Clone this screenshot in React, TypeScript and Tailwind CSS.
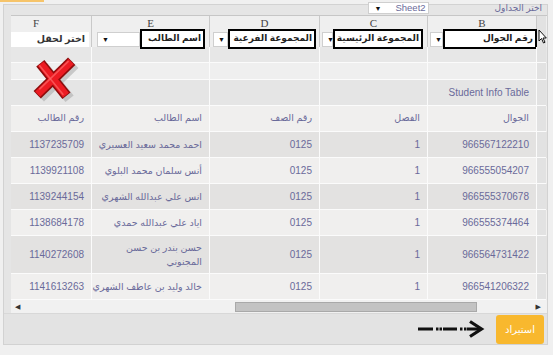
import React from "react";

type Row = {
  id: string;
  name: string[];
  cls: string;
  sec: string;
  phone: string;
  tall?: boolean;
};

const rows: Row[] = [
  { id: "1137235709", name: ["احمد محمد سعيد العسيري"], cls: "0125", sec: "1", phone: "966567122210" },
  { id: "1139921108", name: ["أنس سلمان محمد البلوي"], cls: "0125", sec: "1", phone: "966555054207" },
  { id: "1139244154", name: ["انس علي عبدالله الشهري"], cls: "0125", sec: "1", phone: "966555370678" },
  { id: "1138684178", name: ["اياد علي عبدالله حمدي"], cls: "0125", sec: "1", phone: "966555374464" },
  { id: "1140272608", name: ["حسن بندر بن حسن", "المجنوني"], cls: "0125", sec: "1", phone: "966564731422", tall: true },
  { id: "1141613263", name: ["خالد وليد بن عاطف الشهري"], cls: "0125", sec: "1", phone: "966541206322" },
];

const grid = "grid grid-cols-[81px_118px_110px_108px_109px_9px]";
const cell = "flex items-center justify-end border-r border-b border-[#fbfbfb] pr-[7px] text-right whitespace-nowrap";
const nameCell = "flex flex-col items-end justify-center border-r border-b border-[#fbfbfb] pr-[7px] text-right whitespace-nowrap text-[9.5px]";
const blank = "border-r border-b border-[#fbfbfb]";
const gutter = "border-b border-[#fbfbfb] bg-[#e2e2e2]";

const Tri = () => <span className="text-[7px] leading-none text-[#111]">▼</span>;

const Picker = ({ white, box, label, pl, pr }: { white: string; box: string; label: string; pl: string; pr: string }) => (
  <div className={`flex items-center justify-end border-r border-[#c9c9c9] ${pl} ${pr}`}>
    <div className={`flex h-[15px] items-center border border-[#cfcfcf] bg-white pl-[4px] ${white}`}>
      <Tri />
    </div>
    <div
      className={`flex h-[20px] items-center justify-end whitespace-nowrap border-2 border-black bg-white pr-[2px] text-[9px] font-bold text-[#222] ${box}`}
    >
      <span dir="rtl">{label}</span>
    </div>
  </div>
);

const RedX = () => (
  <svg width="46" height="46" viewBox="0 0 44 44" className="absolute left-[33px] top-[57px]">
    <g stroke="#9a9a9a" strokeOpacity="0.45" strokeWidth="10">
      <line x1="10" y1="9" x2="35" y2="40" />
      <line x1="40" y1="7" x2="7" y2="39" />
    </g>
    <g stroke="#8e0b0b" strokeWidth="10">
      <line x1="7" y1="6" x2="32" y2="37" />
      <line x1="37" y1="4" x2="4" y2="36" />
    </g>
    <g stroke="#ec1b22" strokeWidth="7">
      <line x1="7.5" y1="6.5" x2="31.5" y2="36.5" />
      <line x1="36.5" y1="4.5" x2="4.5" y2="35.5" />
    </g>
    <g stroke="#ff6a6a" strokeWidth="1.5" strokeOpacity="0.7">
      <line x1="6" y1="8" x2="29" y2="36" />
      <line x1="34" y1="4" x2="6" y2="31" />
    </g>
  </svg>
);

const Pointer = () => (
  <svg width="9" height="15" viewBox="0 0 9 15" className="absolute left-[538px] top-[29px]">
    <path d="M1 1 L1 12 L3.5 9.5 L5.5 14 L7 13.3 L5 9 L8.3 9 Z" fill="#fff" stroke="#111" strokeWidth="1" strokeLinejoin="round" />
  </svg>
);

const DashArrow = () => (
  <svg width="68" height="18" viewBox="0 0 68 18">
    <g fill="#111">
      <rect x="0" y="7.5" width="15" height="3" />
      <rect x="18" y="7.5" width="2.5" height="3" />
      <rect x="21.5" y="7.5" width="2.5" height="3" />
      <rect x="25" y="7.5" width="14" height="3" />
      <rect x="42" y="7.5" width="2.5" height="3" />
      <rect x="46" y="7.5" width="2.5" height="3" />
      <rect x="49" y="7.5" width="13" height="3" />
    </g>
    <path d="M52 1.5 L63.5 9 L52 16.5" fill="none" stroke="#111" strokeWidth="3.2" strokeLinejoin="miter" />
  </svg>
);

export default function App() {
  return (
    <div className="relative h-[355px] w-[553px] overflow-hidden bg-[#f0f0f0] font-['Liberation_Sans','DejaVu_Sans',sans-serif]">
      <div className="h-[2px] w-[44px] bg-[#f6c46a]" />
      <div className="ml-[3px] mt-[2px] w-[545px] border border-[#d2d2d2] bg-[#e5e5e5]">
        {/* top bar */}
        <div className="flex h-[10px] items-start justify-end pr-[5px]">
          <div className="-mt-[3px] flex h-[12px] w-[61px] items-center justify-between border border-[#cfcfcf] bg-white pl-[6px] pr-[2px]">
            <Tri />
            <span className="text-[9.5px] leading-none text-[#6a6a9a]">Sheet2</span>
          </div>
          <span dir="rtl" className="ml-[66px] -mt-[1px] text-[9px] leading-none text-[#6a6a9a]">
            اختر الجداول
          </span>
        </div>

        {/* sheet grid */}
        <div className="pl-[7px]">
          <div className={`${grid} h-[14px] border-t border-[#c6c6c6] bg-[#efefef] font-['Liberation_Serif',serif] text-[11px] leading-[14px] text-[#444]`}>
            <div className="border-r border-[#c9c9c9] pl-[22px]">F</div>
            <div className="border-r border-[#c9c9c9] text-center">E</div>
            <div className="border-r border-[#c9c9c9] text-center">D</div>
            <div className="border-r border-[#c9c9c9] text-center">C</div>
            <div className="border-r border-[#c9c9c9] text-center">B</div>
            <div className="bg-[#e2e2e2]" />
          </div>

          <div className={`${grid} h-[18px] bg-[#efefef]`}>
            <div className="flex items-center border-r border-[#c9c9c9] pr-[2px]">
              <div className="flex h-[15px] w-full items-center justify-end bg-white pr-[4px] text-[9.5px] font-bold text-[#333]">
                <span dir="rtl">اختر لحقل</span>
              </div>
            </div>
            <Picker white="w-[43px]" box="w-[66px]" label="اسم الطالب" pl="pl-[5px]" pr="pr-[4px]" />
            <Picker white="w-[15px]" box="w-[89px]" label="المجموعة الفرعية" pl="pl-[3px]" pr="pr-[3px]" />
            <Picker white="w-[11px]" box="w-[91px]" label="المجموعة الرئيسية" pl="pl-[2px]" pr="pr-[4px]" />
            <Picker white="w-[13px]" box="w-[95px] -mr-[1px]" label="رقم الجوال" pl="pl-[2px]" pr="pr-[0px]" />
            <div className="bg-[#e2e2e2]" />
          </div>

          <div className={`${grid} h-[16px] bg-[#e7e7e7]`}>
            <div className={blank} />
            <div className={blank} />
            <div className={blank} />
            <div className={blank} />
            <div className={blank} />
            <div className={gutter} />
          </div>
          <div className={`${grid} h-[17px] bg-[#efefef]`}>
            <div className={blank} />
            <div className={blank} />
            <div className={blank} />
            <div className={blank} />
            <div className={blank} />
            <div className={gutter} />
          </div>
          <div className={`${grid} h-[26px] bg-[#e5e5e5] text-[10px] text-[#6a6a9a]`}>
            <div className={blank} />
            <div className={blank} />
            <div className={blank} />
            <div className={blank} />
            <div className={cell}>Student Info Table</div>
            <div className={gutter} />
          </div>

          <div className={`${grid} h-[26px] bg-[#f0efee] text-[9.5px] text-[#6a6a9a]`}>
            <div className={cell}><span dir="rtl">رقم الطالب</span></div>
            <div className={cell}><span dir="rtl">اسم الطالب</span></div>
            <div className={cell}><span dir="rtl">رقم الصف</span></div>
            <div className={cell}><span dir="rtl">الفصل</span></div>
            <div className={cell}><span dir="rtl">الجوال</span></div>
            <div className={gutter} />
          </div>

          {rows.map((r, i) => (
            <div
              key={r.id}
              className={`${grid} ${r.tall ? "h-[38px]" : "h-[26px]"} ${i % 2 === 0 ? "bg-[#e3e2e1]" : "bg-[#f0efee]"} text-[10px] leading-[14px] text-[#6a6a9a]`}
            >
              <div className={cell}>{r.id}</div>
              <div className={nameCell}>
                {r.name.map((n) => (
                  <span key={n} dir="rtl">
                    {n}
                  </span>
                ))}
              </div>
              <div className={cell}>{r.cls}</div>
              <div className={cell}>{r.sec}</div>
              <div className={cell}>{r.phone}</div>
              <div className={gutter} />
            </div>
          ))}

          {/* horizontal scrollbar */}
          <div className="flex h-[13px] items-center bg-[#f1f1f1] pl-[4px] pr-[6px]">
            <span className="text-[7px] leading-none text-[#333]">◀</span>
            <div className="ml-[215px] h-[10px] w-[242px] border border-[#a9a9a9] bg-[#c3c3c3]" />
            <span className="ml-auto text-[7px] leading-none text-[#333]">▶</span>
          </div>
        </div>

        {/* bottom bar */}
        <div className="flex h-[31px] items-center justify-end border-t border-[#d8d8d8] bg-[#e3e3e3] pr-[3px]">
          <DashArrow />
          <button className="ml-[10px] flex h-[29px] w-[48px] items-center justify-center rounded-[3px] bg-[#f8b82e] text-[10px] text-white">
            استيراد
          </button>
        </div>
      </div>

      <RedX />
      <Pointer />
    </div>
  );
}
